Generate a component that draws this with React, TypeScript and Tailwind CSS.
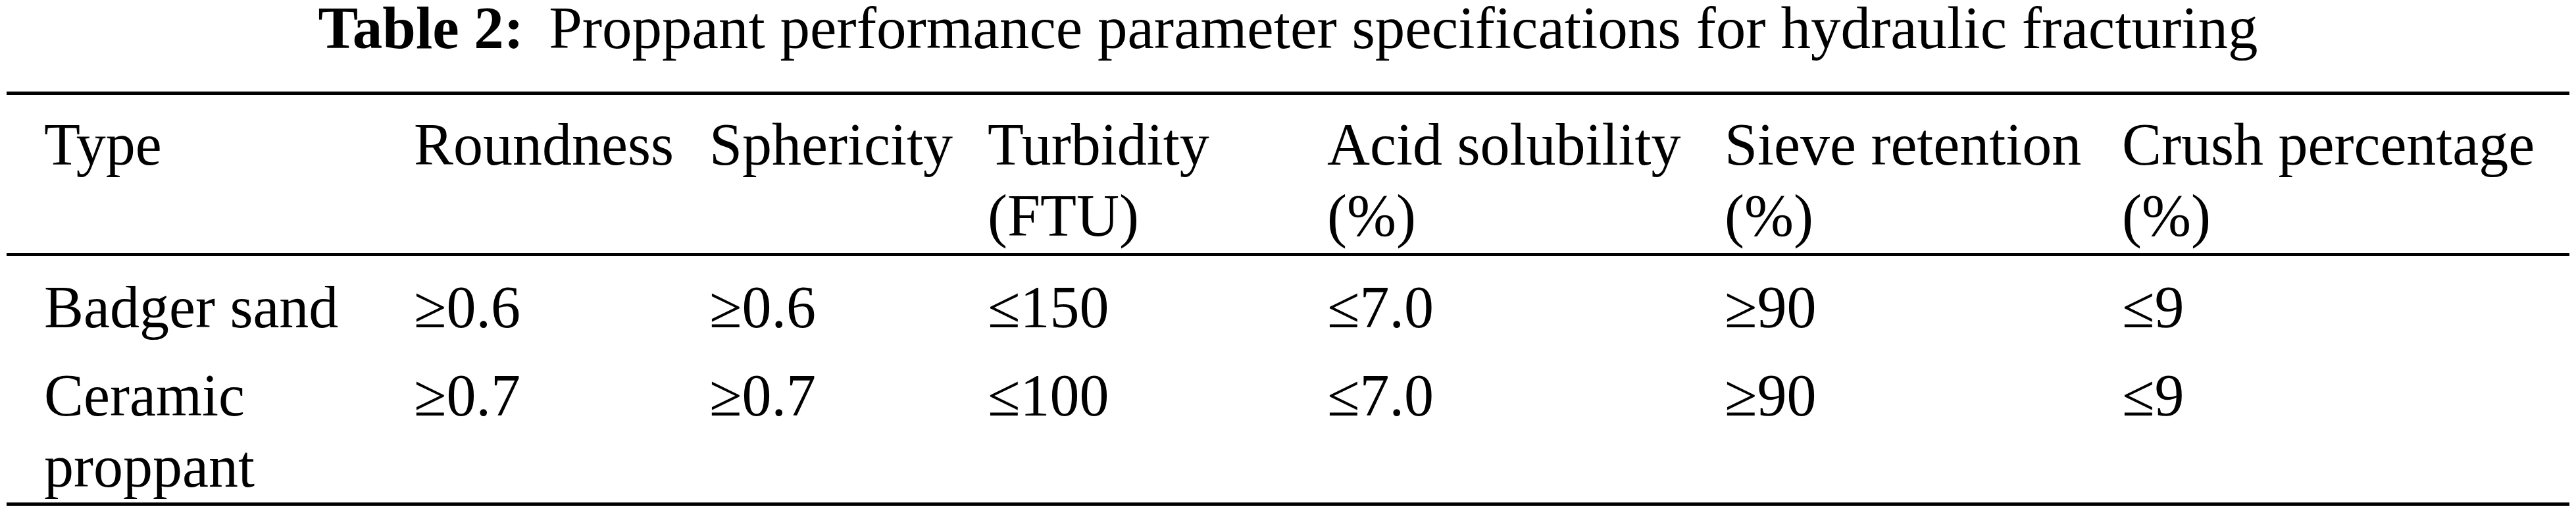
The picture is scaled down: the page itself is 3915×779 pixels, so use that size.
import React from "react";

const header: React.ReactNode[] = [
  "Type",
  "Roundness",
  "Sphericity",
  <>Turbidity<br />(FTU)</>,
  <>Acid solubility<br />(%)</>,
  <>Sieve retention<br />(%)</>,
  <>Crush percentage<br />(%)</>,
];

const rows: React.ReactNode[][] = [
  ["Badger sand", "≥0.6", "≥0.6", "≤150", "≤7.0", "≥90", "≤9"],
  [<>Ceramic<br />proppant</>, "≥0.7", "≥0.7", "≤100", "≤7.0", "≥90", "≤9"],
];

const gridCols =
  "grid grid-cols-[562px_449px_423px_516px_604px_604px_1fr] pl-[57px]";

export default function App() {
  return (
    <div className="w-[3915px] h-[779px] bg-white text-black font-['Liberation_Serif','Times_New_Roman',serif] text-[90px]">
      <div className="h-[139px] text-[91px] leading-[86px] text-center whitespace-nowrap">
        <b className="font-bold">Table 2:</b>
        <span className="ml-[38px]">
          Proppant performance parameter specifications for hydraulic fracturing
        </span>
      </div>
      <div className="mx-[10px] border-t-[5px] border-b-[5px] border-black">
        <div className={`${gridCols} pt-[22px] pb-[2px] leading-[108px]`}>
          {header.map((h, i) => (
            <div key={i} className="whitespace-nowrap">
              {h}
            </div>
          ))}
        </div>
      </div>
      <div className="mx-[10px] border-b-[5px] border-black">
        <div className={`${gridCols} pt-[24px] pb-[3px] leading-[108px]`}>
          {rows[0].map((c, i) => (
            <div key={i} className="whitespace-nowrap">
              {c}
            </div>
          ))}
        </div>
        <div className={`${gridCols} pt-[23px] leading-[108px]`}>
          {rows[1].map((c, i) => (
            <div key={i} className="whitespace-nowrap">
              {c}
            </div>
          ))}
        </div>
      </div>
    </div>
  );
}
